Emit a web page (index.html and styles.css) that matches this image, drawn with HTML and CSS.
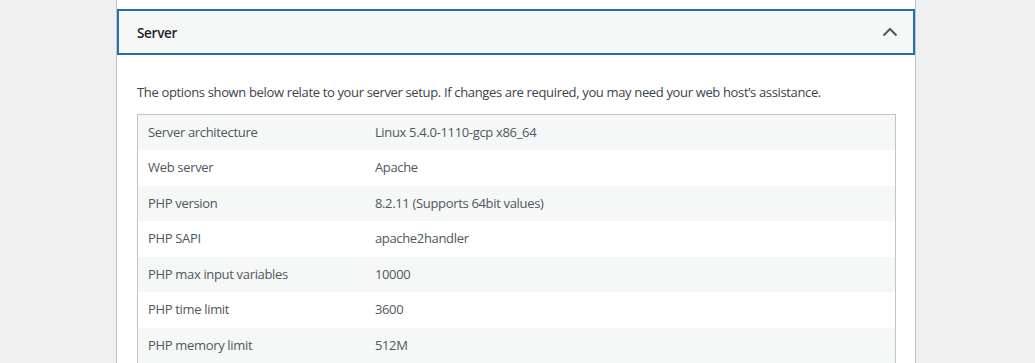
FILE: index.html
```html
<!DOCTYPE html>
<html lang="en">
<head>
    <meta charset="UTF-8">
    <title>Site Health - Info</title>
    <link rel="stylesheet" href="styles.css">
</head>
<body>
    <div class="wrap">
        <div class="accordion">
            <div class="accordion-gap"></div>

            <!-- Server section -->
            <button class="accordion-trigger" aria-expanded="true">
                <span class="title">Server</span>
                <svg class="chevron" width="16" height="10" viewBox="0 0 16 10">
                    <polyline points="1.5,8.5 8,2 14.5,8.5" fill="none" stroke="#50575e" stroke-width="2"/>
                </svg>
            </button>

            <div class="accordion-panel">
                <p>The options shown below relate to your server setup. If changes are required, you may need your web host’s assistance.</p>
                <table class="info-table">
                    <tbody>
                        <tr><td>Server architecture</td><td>Linux 5.4.0-1110-gcp x86_64</td></tr>
                        <tr><td>Web server</td><td>Apache</td></tr>
                        <tr><td>PHP version</td><td>8.2.11 (Supports 64bit values)</td></tr>
                        <tr><td>PHP SAPI</td><td>apache2handler</td></tr>
                        <tr><td>PHP max input variables</td><td>10000</td></tr>
                        <tr><td>PHP time limit</td><td>3600</td></tr>
                        <tr><td>PHP memory limit</td><td>512M</td></tr>
                    </tbody>
                </table>
            </div>
        </div>
    </div>
</body>
</html>
```

FILE: styles.css
```css
body {
    margin: 0;
    background-color: #f0f0f1;
    font-family: "Open Sans", "Noto Sans", sans-serif;
    font-size: 13px;
    color: #3c434a;
    overflow: hidden;
}

.wrap {
    margin-left: 116px;
    width: 800px;
}

.accordion {
    background-color: #fff;
    border: 1px solid #c3c4c7;
    border-top: none;
}

.accordion-gap {
    height: 9px;
}

.accordion-trigger {
    display: flex;
    align-items: center;
    justify-content: space-between;
    box-sizing: border-box;
    width: 100%;
    height: 46px;
    margin: 0;
    padding: 1px 15px 0 18px;
    background-color: #f6f7f7;
    border: 2px solid #2271b1;
    font-family: inherit;
    font-size: 13.5px;
    font-weight: 600;
    letter-spacing: -0.3px;
    color: #1d2327;
    text-align: left;
    cursor: pointer;
}

.chevron {
    display: block;
    margin-top: -2px;
}

.accordion-panel {
    padding: 28px 19px 0 20px;
}

.accordion-panel p {
    margin: 0 0 11px;
    line-height: 1.5;
    font-size: 13px;
    letter-spacing: -0.35px;
    color: #3c434a;
}

.info-table {
    width: 759px;
    border: 1px solid #c3c4c7;
    border-collapse: collapse;
    background-color: #fff;
}

.info-table td {
    padding: 8px 10px;
    line-height: 1.5;
    color: #50575e;
    font-size: 13px;
    letter-spacing: -0.33px;
}

.info-table td:first-child {
    width: 30%;
}

.info-table tr:nth-child(odd) td {
    background-color: #f6f7f7;
}
```
